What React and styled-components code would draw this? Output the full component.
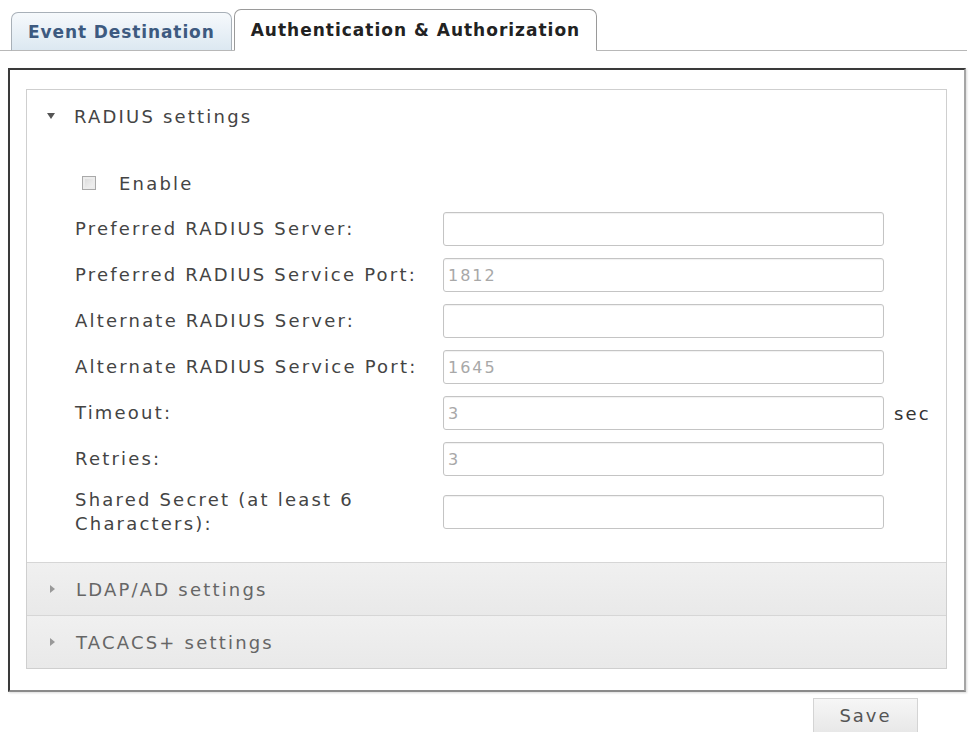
import React, { useState } from "react";
import styled, { createGlobalStyle } from "styled-components";

const GlobalStyle = createGlobalStyle`
  body {
    margin: 0;
    background: #ffffff;
    font-family: "DejaVu Sans", Verdana, sans-serif;
    color: #333;
  }
`;

const Page = styled.div`
  width: 970px;
  padding-top: 8px;
`;

const TabStrip = styled.div`
  display: flex;
  align-items: flex-end;
  gap: 2px;
  padding-left: 11px;
  margin-right: 3px;
  border-bottom: 1px solid #b8b8b8;
  height: 42px;
`;

const Tab = styled.div`
  height: ${(p) => (p.$active ? "42px" : "39px")};
  margin-bottom: -1px;
  padding: 0 16px;
  display: flex;
  align-items: center;
  font-size: 17px;
  font-weight: bold;
  letter-spacing: ${(p) => (p.$active ? "1px" : "0.9px")};
  border: 1px solid ${(p) => (p.$active ? "#9a9a9a" : "#a8b0b8")};
  border-bottom: ${(p) => (p.$active ? "1px solid #fff" : "1px solid #b8b8b8")};
  border-radius: 7px 7px 0 0;
  color: ${(p) => (p.$active ? "#222" : "#3d5a80")};
  background: ${(p) =>
    p.$active ? "#ffffff" : "linear-gradient(#f6f9fc, #dce8f1)"};
  box-sizing: border-box;
`;

const Panel = styled.div`
  margin: 17px 4px 0 8px;
  border-top: 2px solid #3a3a3a;
  border-left: 2px solid #3a3a3a;
  border-right: 2px solid #a5a5a5;
  border-bottom: 2px solid #8a8a8a;
  box-shadow: 1px 1px 2px rgba(0, 0, 0, 0.15);
  padding: 19px 17px 21px 16px;
`;

const Accordion = styled.div`
  border: 1px solid #cfcfcf;
`;

const SectionHeader = styled.div`
  height: 52px;
  display: flex;
  align-items: center;
  padding-left: 20px;
  font-size: 18px;
  letter-spacing: 2.2px;
  color: ${(p) => (p.$open ? "#444" : "#666")};
  background: ${(p) =>
    p.$open ? "#ffffff" : "linear-gradient(#f0f0f0, #e9e9e9)"};
  border-top: ${(p) => (p.$first ? "none" : "1px solid #d6d6d6")};
  cursor: pointer;
`;

const Arrow = styled.span`
  width: 0;
  height: 0;
  margin-right: ${(p) => (p.$open ? "19px" : "21px")};
  ${(p) =>
    p.$open
      ? `border-left: 4px solid transparent;
         border-right: 4px solid transparent;
         border-top: 6px solid #555;`
      : `border-top: 4px solid transparent;
         border-bottom: 4px solid transparent;
         border-left: 5px solid #999;
         margin-left: 3px;`}
`;

const SectionBody = styled.div`
  padding: 24px 0 26px 48px;
  display: flex;
  flex-direction: column;
  gap: 12px;
  background: #fff;
`;

const CheckRow = styled.label`
  height: 34px;
  display: flex;
  align-items: center;
  gap: 23px;
  padding-left: 7px;
  font-size: 18px;
  letter-spacing: 2.2px;
  color: #444;
`;

const CheckBox = styled.span`
  width: 14px;
  height: 14px;
  box-sizing: border-box;
  border: 1px solid #a9a9a9;
  background: linear-gradient(135deg, #d8d8d8, #f6f6f6);
  box-shadow: inset 0 0 0 2px #ececec;
`;

const FieldRow = styled.div`
  display: flex;
  align-items: center;
  min-height: 34px;
`;

const Label = styled.div`
  width: 368px;
  font-size: 18px;
  letter-spacing: 2.2px;
  line-height: 24px;
  color: #444;
  padding-right: 10px;
  box-sizing: border-box;
`;

const Input = styled.input`
  width: 441px;
  height: 34px;
  box-sizing: border-box;
  border: 1px solid #c4c4c4;
  border-radius: 3px;
  box-shadow: inset 0 1px 1px rgba(0, 0, 0, 0.06);
  padding: 0 4px;
  font-family: "DejaVu Sans", Verdana, sans-serif;
  font-size: 16px;
  letter-spacing: 2px;
  color: #a8a8a8;
  background: #fff;
  outline: none;
`;

const Unit = styled.span`
  margin-left: 10px;
  font-size: 18px;
  letter-spacing: 2.2px;
  color: #333;
`;

const Footer = styled.div`
  display: flex;
  justify-content: flex-end;
  padding: 6px 52px 0 0;
`;

const SaveButton = styled.button`
  width: 105px;
  height: 35px;
  border: 1px solid #d4d4d4;
  background: linear-gradient(#f6f6f6, #e8e8e8);
  font-family: "DejaVu Sans", Verdana, sans-serif;
  font-size: 18px;
  letter-spacing: 2px;
  color: #555;
  cursor: pointer;
`;

const fields = [
  { label: "Preferred RADIUS Server:", value: "" },
  { label: "Preferred RADIUS Service Port:", value: "1812" },
  { label: "Alternate RADIUS Server:", value: "" },
  { label: "Alternate RADIUS Service Port:", value: "1645" },
  { label: "Timeout:", value: "3", unit: "sec" },
  { label: "Retries:", value: "3" },
  { label: "Shared Secret (at least 6 Characters):", value: "", password: true },
];

export default function App() {
  const [open, setOpen] = useState("radius");

  return (
    <Page>
      <GlobalStyle />
      <TabStrip>
        <Tab>Event Destination</Tab>
        <Tab $active>Authentication &amp; Authorization</Tab>
      </TabStrip>
      <Panel>
        <Accordion>
          <SectionHeader $open={open === "radius"} $first onClick={() => setOpen("radius")}>
            <Arrow $open={open === "radius"} />
            RADIUS settings
          </SectionHeader>
          {open === "radius" && (
            <SectionBody>
              <CheckRow>
                <CheckBox />
                Enable
              </CheckRow>
              {fields.map((f) => (
                <FieldRow key={f.label}>
                  <Label>{f.label}</Label>
                  <Input
                    type={f.password ? "password" : "text"}
                    defaultValue={f.value}
                  />
                  {f.unit && <Unit>{f.unit}</Unit>}
                </FieldRow>
              ))}
            </SectionBody>
          )}
          <SectionHeader $open={open === "ldap"} onClick={() => setOpen("ldap")}>
            <Arrow $open={open === "ldap"} />
            LDAP/AD settings
          </SectionHeader>
          <SectionHeader $open={open === "tacacs"} onClick={() => setOpen("tacacs")}>
            <Arrow $open={open === "tacacs"} />
            TACACS+ settings
          </SectionHeader>
        </Accordion>
      </Panel>
      <Footer>
        <SaveButton>Save</SaveButton>
      </Footer>
    </Page>
  );
}
